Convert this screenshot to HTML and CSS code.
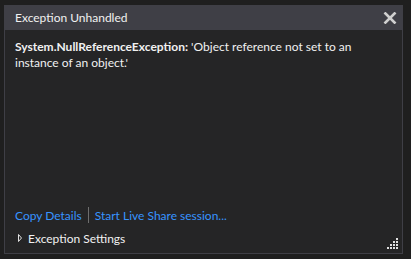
FILE: index.html
```html
<!DOCTYPE html>
<html lang="en">
<head>
  <meta charset="UTF-8">
  <title>Exception Unhandled</title>
  <link rel="stylesheet" href="styles.css">
</head>
<body>
  <div class="dialog">
    <div class="titlebar">
      <span class="title">Exception Unhandled</span>
      <svg class="close" viewBox="0 0 14 12">
        <path d="M1.5 0.5L12.5 11.5M12.5 0.5L1.5 11.5"></path>
      </svg>
    </div>

    <div class="message">
      <b>System.NullReferenceException:</b> 'Object reference not set to an instance of an object.'
    </div>

    <div class="footer">
      <div class="links">
        <a class="link">Copy Details</a>
        <span class="sep"></span>
        <a class="link">Start Live Share session...</a>
      </div>
      <div class="settings">
        <svg class="arrow" viewBox="0 0 4 8">
          <path d="M0.5 0.5L3.5 4L0.5 7.5Z"></path>
        </svg>
        <span>Exception Settings</span>
      </div>
    </div>

    <svg class="grip" viewBox="0 0 12 12">
      <rect x="9" y="0" width="2" height="2"></rect>
      <rect x="6" y="3" width="2" height="2"></rect>
      <rect x="9" y="3" width="2" height="2"></rect>
      <rect x="3" y="6" width="2" height="2"></rect>
      <rect x="6" y="6" width="2" height="2"></rect>
      <rect x="9" y="6" width="2" height="2"></rect>
      <rect x="0" y="9" width="2" height="2"></rect>
      <rect x="3" y="9" width="2" height="2"></rect>
      <rect x="6" y="9" width="2" height="2"></rect>
      <rect x="9" y="9" width="2" height="2"></rect>
    </svg>
  </div>
</body>
</html>
```

FILE: styles.css
```css
:root {
  --outer-bg: #1f1f1f;
  --body-bg: #252526;
  --title-bg: #3f3f46;
  --border: #3f3f46;
  --text: #f1f1f1;
  --link: #3794ff;
}

* {
  margin: 0;
  padding: 0;
  box-sizing: border-box;
}

body {
  background: var(--outer-bg);
  padding: 5px 4px;
  font-family: Lato, "Noto Sans", sans-serif;
  font-size: 12px;
  color: var(--text);
}

.dialog {
  position: relative;
  width: 399px;
  height: 249px;
  background: var(--body-bg);
  border: 1px solid var(--border);
  border-top: none;
  display: flex;
  flex-direction: column;
}

.titlebar {
  height: 25px;
  margin: 0 -1px;
  background: var(--title-bg);
  display: flex;
  align-items: center;
  justify-content: space-between;
  padding: 0 6px 0 11px;
}

.title {
  font-size: 12px;
}

.close {
  width: 14px;
  height: 12px;
  stroke: #d0d0d0;
  stroke-width: 2.6;
  fill: none;
}

.message {
  padding: 9px 10px 0 10px;
  line-height: 16px;
  font-size: 12px;
}

.message b {
  font-weight: 700;
}

.footer {
  margin-top: auto;
  padding: 0 10px 5px 10px;
}

.links {
  display: flex;
  align-items: center;
  height: 20px;
}

.link {
  color: var(--link);
  cursor: pointer;
}

.sep {
  width: 1px;
  height: 16px;
  background: #6e6e6e;
  margin: 0 6px;
}

.settings {
  display: flex;
  align-items: center;
  height: 20px;
  margin-top: 3px;
}

.arrow {
  width: 4px;
  height: 8px;
  margin: 0 6px 0 3px;
  fill: none;
  stroke: #e0e0e0;
  stroke-width: 1;
}

.grip {
  position: absolute;
  right: 3px;
  bottom: 3px;
  width: 12px;
  height: 12px;
  fill: #e0e0e0;
}
```
